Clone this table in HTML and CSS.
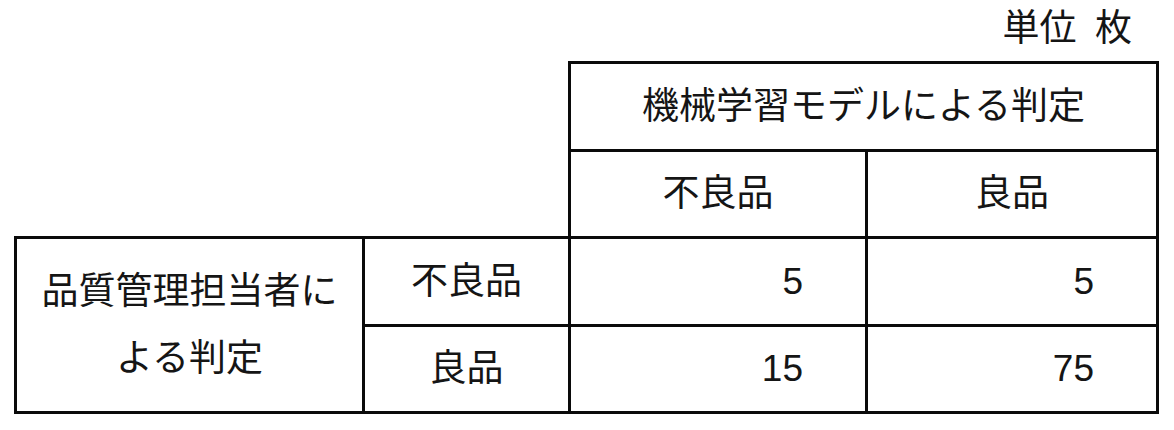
FILE: index.html
```html
<!DOCTYPE html>
<html lang="ja">
<head>
<meta charset="utf-8">
<title>判定結果</title>
<link rel="stylesheet" href="styles.css">
</head>
<body>
<div class="page">
  <div class="unit">単位&ensp;枚</div>
  <table class="matrix">
    <colgroup>
      <col class="c1"><col class="c2"><col class="c3"><col class="c4">
    </colgroup>
    <tr class="r1">
      <td class="blank" colspan="2" rowspan="2"></td>
      <th colspan="2">機械学習モデルによる判定</th>
    </tr>
    <tr class="r2">
      <th>不良品</th>
      <th>良品</th>
    </tr>
    <tr class="r3">
      <th class="rowhead" rowspan="2">品質管理担当者に<br>よる判定</th>
      <th>不良品</th>
      <td class="num">5</td>
      <td class="num">5</td>
    </tr>
    <tr class="r4">
      <th>良品</th>
      <td class="num">15</td>
      <td class="num">75</td>
    </tr>
  </table>
</div>
</body>
</html>
```

FILE: styles.css
```css
html, body {
  margin: 0;
  padding: 0;
  background: #ffffff;
}

body {
  font-family: "Liberation Sans", "Noto Sans CJK JP", sans-serif;
  font-size: 37px;
  color: #151515;
}

.page {
  width: 1174px;
  height: 430px;
  overflow: hidden;
}

.unit {
  height: 61px;
  box-sizing: border-box;
  display: flex;
  align-items: center;
  justify-content: flex-end;
  padding-right: 42px;
  padding-bottom: 5px;
  line-height: 37px;
}

.matrix {
  margin-left: 14px;
  border-collapse: collapse;
  table-layout: fixed;
  width: 1145px;
}

.c1 { width: 348px; }
.c2 { width: 206px; }
.c3 { width: 297px; }
.c4 { width: 291px; }

.r1 { height: 88px; }
.r2 { height: 87px; }
.r3 { height: 88px; }
.r4 { height: 87px; }

.matrix th,
.matrix td {
  border: 3px solid #0a0a0a;
  padding: 0;
  font-weight: normal;
  text-align: center;
  vertical-align: middle;
  line-height: 40px;
}

.matrix .blank {
  border: none;
}

.matrix .rowhead {
  line-height: 67px;
}

.matrix .num {
  text-align: right;
  padding-right: 62px;
}
```
